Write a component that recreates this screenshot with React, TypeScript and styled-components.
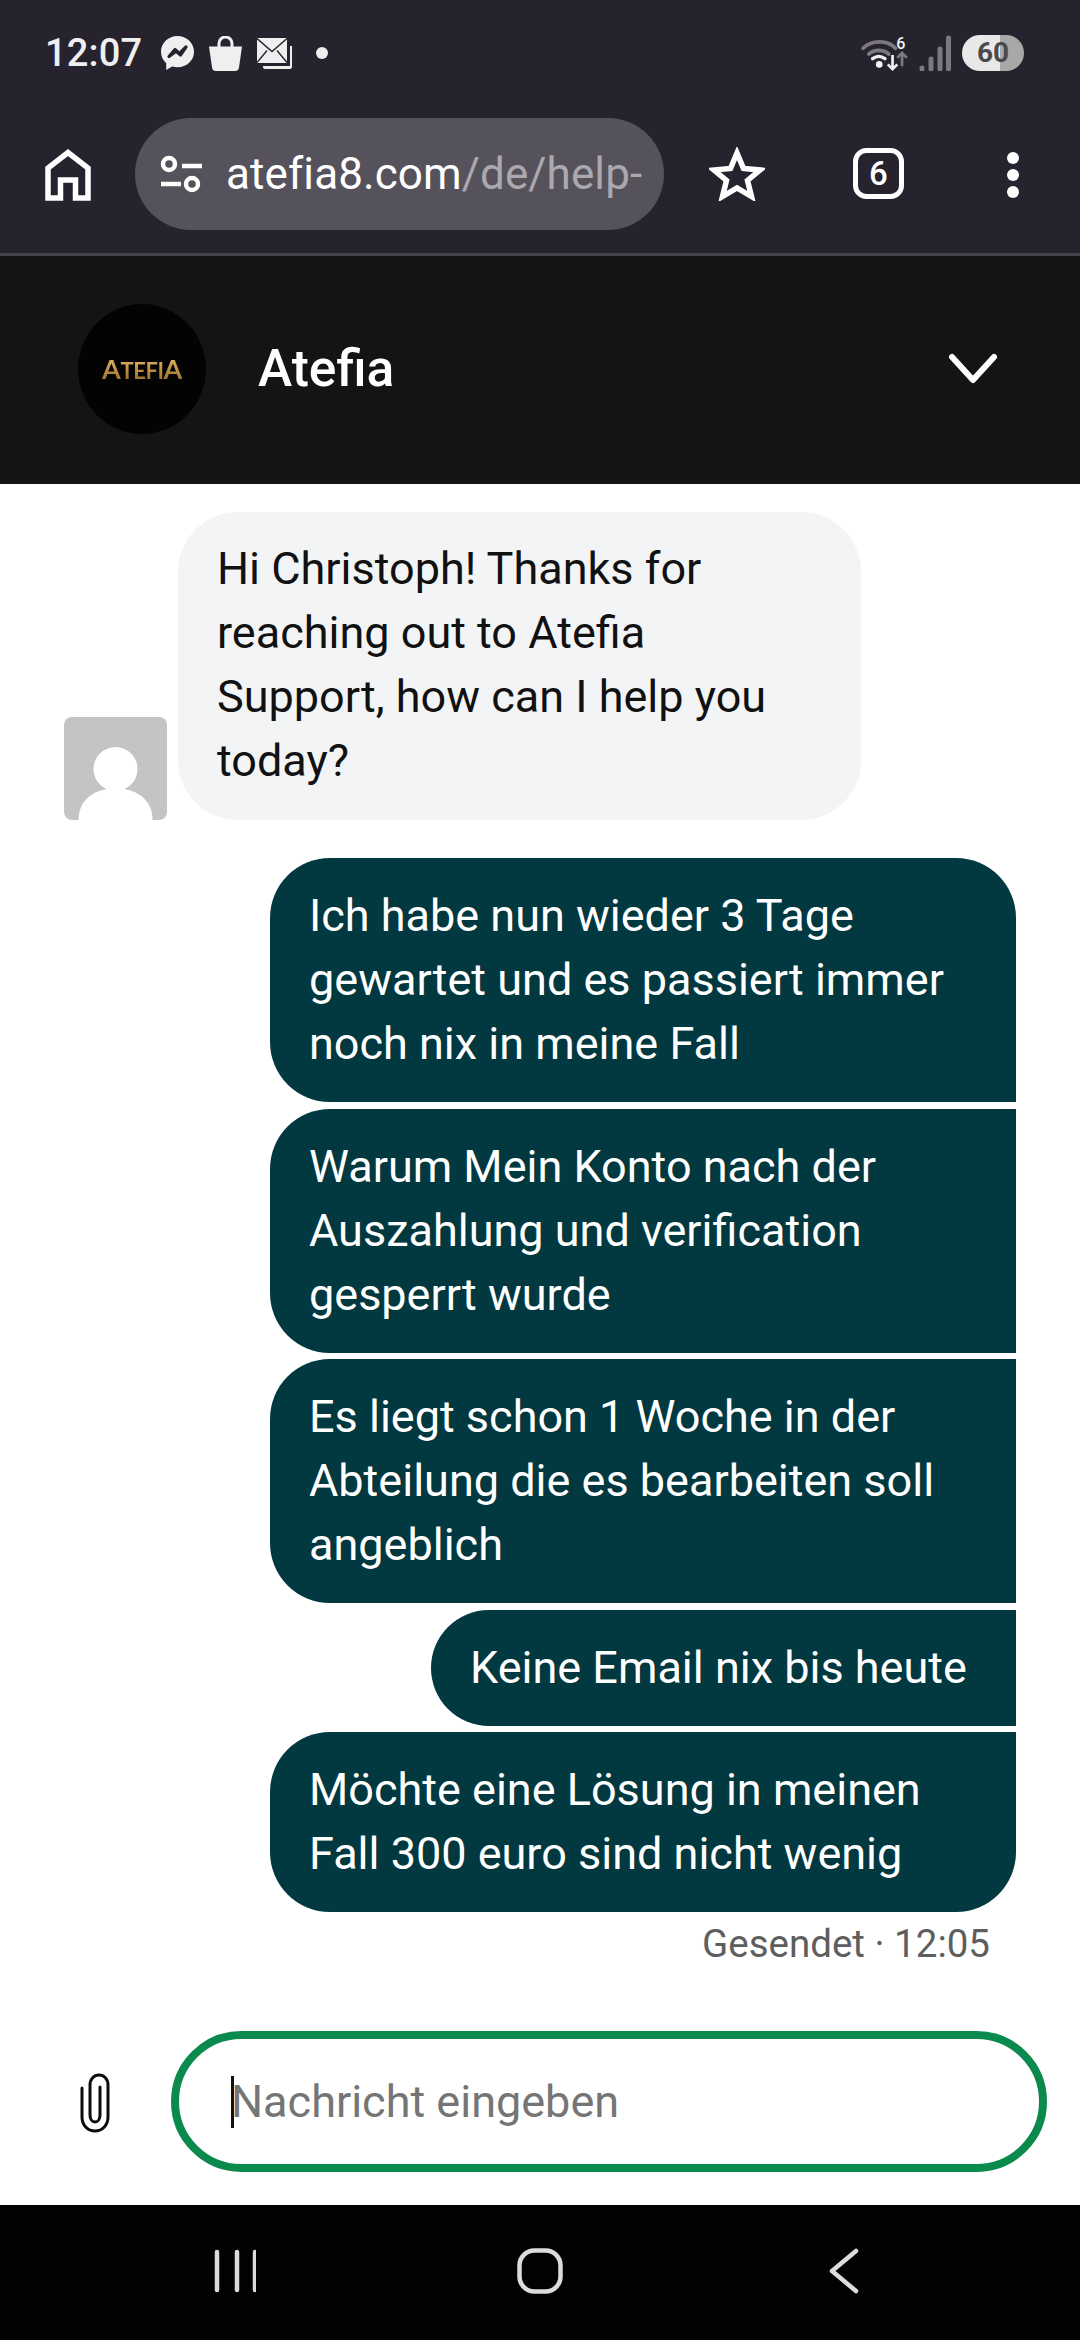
import React from "react";
import styled, { createGlobalStyle } from "styled-components";

const Global = createGlobalStyle`
  html, body { margin: 0; padding: 0; background: #fff; }
  * { box-sizing: border-box; }
  body { font-family: Roboto, "Liberation Sans", sans-serif; }
`;
const Page = styled.div`
  width: 1080px; height: 2340px; display: flex; flex-direction: column; overflow: hidden; background: #fff;
`;
const BrowserChrome = styled.div`
  height: 256px; background: #26222e; border-bottom: 3px solid #45424e; flex: none;
`;
const StatusBar = styled.div`
  height: 106px; padding: 0 0 0 45px; display: flex; align-items: center; color: #f1f1f1;
`;
const Time = styled.span`
  font: 500 38px/1 Roboto, sans-serif; letter-spacing: 0.2px; width: 116px; color: #efefef;
`;
const NotifIcons = styled.div`
  display: flex; align-items: center; gap: 15px;
`;
const Dot = styled.span`
  width: 12px; height: 12px; border-radius: 50%; background: #efefef; margin-left: 24px;
`;
const StatusRight = styled.div`
  margin-left: auto; margin-right: 56px; display: flex; align-items: center; gap: 11px;
`;
const Battery = styled.div`
  width: 62px; height: 36px; border-radius: 18px; overflow: hidden;
  background: linear-gradient(90deg, #e8e8e8 0 61%, #a8a8a8 61% 100%);
  display: flex; align-items: center; justify-content: center;
  font: 700 28px/1 Roboto, sans-serif; color: #4a4a4e;
`;
const Toolbar = styled.div`
  height: 147px; display: flex; align-items: flex-start; padding: 12px 0 0 45px;
`;
const ToolIcon = styled.div<{ $ml: number; $mt: number }>`
  margin-left: ${(p) => p.$ml}px; margin-top: ${(p) => p.$mt}px; display: flex; flex: none;
`;
const UrlPill = styled.div`
  width: 529px; height: 112px; margin-left: 44px; border-radius: 56px; background: #56525c;
  display: flex; align-items: center; padding-left: 25px; overflow: hidden; flex: none;
`;
const UrlText = styled.div`
  margin-left: 24px; font: 400 44px/1 Roboto, sans-serif; color: #fff; white-space: nowrap; letter-spacing: 0.1px;
  span { color: #aba8ae; }
`;
const ChatHeader = styled.header`
  height: 228px; flex: none; background: #141512; display: flex; align-items: center; padding: 0 82px 3px 78px;
`;
const Logo = styled.div`
  width: 128px; height: 130px; border-radius: 50%; background: #030303; display: flex; align-items: center; justify-content: center;
`;
const LogoText = styled.span`
  font: 700 27px/1 Lato, sans-serif; letter-spacing: -0.4px;
  background: linear-gradient(180deg, #e8bd68, #9a6c2a);
  -webkit-background-clip: text; background-clip: text; color: transparent;
  small { font-size: 22px; }
`;
const Title = styled.h1`
  margin: 0 0 0 52px; font: 500 51.500px/1 Roboto, sans-serif; color: #fff; flex: 1;
`;
const Chat = styled.main`
  flex: 1; display: flex; flex-direction: column; padding-top: 28px;
`;
const IncomingRow = styled.div`
  display: flex; align-items: flex-end; padding-left: 64px; gap: 11px; margin-bottom: 38px;
`;
const Avatar = styled.div`
  width: 103px; height: 103px; border-radius: 8px; background: #c4c4c4; overflow: hidden; display: flex; flex: none;
`;
const Bubble = styled.div`
  font: 400 45px/64px Roboto, sans-serif; padding: 26px 39px; white-space: nowrap;
`;
const InBubble = styled(Bubble)`
  width: 683px; background: #f3f4f6; color: #111; border-radius: 60px; padding-top: 25px; padding-bottom: 27px;
`;
const OutBubble = styled(Bubble)<{ $w: number; $first?: boolean; $last?: boolean }>`
  width: ${(p) => p.$w}px; background: #023840; color: #fff; margin: 0 64px 6.500px auto;
  border-radius: 60px ${(p) => (p.$first ? "60px" : "0")} ${(p) => (p.$last ? "60px" : "0")} 60px;
`;
const Meta = styled.div`
  font: 400 38.500px/1 Roboto, sans-serif; color: #5e5e5e; text-align: right; padding-right: 90px; margin-top: 6px;
`;
const Composer = styled.div`
  flex: none; height: 174px; display: flex; align-items: flex-start;
`;
const Clip = styled.div`
  margin: 42px 61px 0 80px; display: flex; flex: none;
`;
const InputBox = styled.div`
  width: 876px; height: 141px; border: 8px solid #0a8a4c; border-radius: 71px; display: flex; align-items: center; padding-left: 52px;
  font: 400 45px/1 Roboto, sans-serif; color: #757575;
`;
const Caret = styled.span`
  width: 3px; height: 52px; background: #111; margin-right: -3px; flex: none;
`;
const NavBar = styled.nav`
  height: 135px; flex: none; background: #020202; display: flex; align-items: flex-start; padding: 43px 0 0 210px;
`;
const NavIcon = styled.div<{ $ml: number }>`
  margin-left: ${(p) => p.$ml}px; display: flex;
`;

export default function App() {
  return (
    <Page>
      <Global />
      <BrowserChrome>
        <StatusBar>
          <Time>12:07</Time>
          <NotifIcons>
            <svg width="33" height="34" viewBox="0 0 33 34">
              <path fill="#efefef" d="M16.5 0C7.4 0 0 6.9 0 15.8c0 4.6 2 8.6 5.2 11.4V34l6-3.5c1.7.5 3.5.8 5.3.8 9.1 0 16.5-6.7 16.5-15.5S25.600 0 16.500 0z" />
              <path fill="none" stroke="#26222e" strokeWidth="3.2" strokeLinejoin="round" d="M8 20.500l6-7 4.500 4 6.500-6.500-5.500 8-4.500-3.800z" />
            </svg>
            <svg width="33" height="35" viewBox="0 0 33 35">
              <path fill="none" stroke="#efefef" strokeWidth="3" d="M10 11V7.500a6.500 6.500 0 0 1 13 0V11" />
              <path fill="#efefef" d="M0 10.500h33l-3 21a4 4 0 0 1-4 3.500H7a4 4 0 0 1-4-3.500z" />
            </svg>
            <svg width="35" height="31" viewBox="0 0 35 31">
              <path fill="#efefef" d="M6 28h27V8h2v21a2 2 0 0 1-2 2H8a2 2 0 0 1-2-2z" />
              <rect width="30" height="25" fill="#efefef" />
              <path fill="none" stroke="#26222e" strokeWidth="1.400" d="M0 .5l15 13 15-13M0 24.500l10-12M30 24.500l-10-12" />
            </svg>
          </NotifIcons>
          <Dot />
          <StatusRight>
            <svg width="48" height="38" viewBox="0 -2 48 40">
              <path fill="none" stroke="#7c7882" strokeWidth="4" strokeLinecap="round" d="M2 13c9-9 26-9 34 0M8 19c6-5 15-5 21 0" />
              <path fill="none" stroke="#f2f2f2" strokeWidth="3.500" strokeLinecap="round" d="M12 24c4-3 9-3 13 0" />
              <circle cx="19" cy="30" r="3.500" fill="#f2f2f2" />
              <path fill="none" stroke="#f2f2f2" strokeWidth="2.800" d="M33 20v15M28 30l5 5 5-5" />
              <path fill="none" stroke="#7c7882" strokeWidth="2.800" d="M43 32V18M38 23l5-5 5 5" />
              <text x="37" y="14" fontFamily="Roboto, sans-serif" fontWeight="500" fontSize="17" fill="#f2f2f2">6</text>
            </svg>
            <svg width="32" height="36" viewBox="0 0 32 36">
              <g stroke="#7c7882" strokeWidth="5" strokeLinecap="round">
                <path d="M3 33v1M12 24v10M21 14v20M29.500 3v31" />
              </g>
            </svg>
            <Battery>60</Battery>
          </StatusRight>
        </StatusBar>
        <Toolbar>
          <ToolIcon $ml={0} $mt={31}>
            <svg width="46" height="52" viewBox="0 0 46 52">
              <path fill="none" stroke="#fff" strokeWidth="5.500" d="M3 49V19L23 3.500 43 19v30H30.500V31h-15v18z" />
            </svg>
          </ToolIcon>
          <UrlPill>
            <svg width="42" height="38" viewBox="0 0 42 38" style={{ flex: "none" }}>
              <g fill="none" stroke="#fff" strokeWidth="4.500">
                <circle cx="9" cy="9" r="6" />
                <circle cx="32" cy="29" r="6" />
              </g>
              <g stroke="#fff" strokeWidth="4.500">
                <path d="M22 11h20M1 29h20" />
              </g>
            </svg>
            <UrlText>atefia8.com<span>/de/help-</span></UrlText>
          </UrlPill>
          <ToolIcon $ml={45} $mt={29}>
            <svg width="56" height="54" viewBox="0 0 56 54">
              <path fill="none" stroke="#fff" strokeWidth="5.500" d="M28 6l6.500 15.500L51 23 38.500 33.500 42.500 49.500 28 41l-14.500 8.500L17.500 33.500 5 23l16.500-1.500z" />
            </svg>
          </ToolIcon>
          <ToolIcon $ml={88} $mt={30}>
            <svg width="51" height="51" viewBox="0 0 51 51">
              <rect x="2.500" y="2.500" width="46" height="46" rx="11" fill="none" stroke="#fff" strokeWidth="5" />
              <text x="25.500" y="37" textAnchor="middle" fontFamily="Roboto, sans-serif" fontWeight="500" fontSize="33" fill="#fff">6</text>
            </svg>
          </ToolIcon>
          <ToolIcon $ml={102} $mt={33}>
            <svg width="14" height="50" viewBox="0 0 14 50">
              <g fill="#fff">
                <circle cx="7" cy="7" r="6" />
                <circle cx="7" cy="24" r="6" />
                <circle cx="7" cy="41" r="6" />
              </g>
            </svg>
          </ToolIcon>
        </Toolbar>
      </BrowserChrome>

      <ChatHeader>
        <Logo>
          <LogoText>A<small>TEFI</small>A</LogoText>
        </Logo>
        <Title>Atefia</Title>
        <svg width="50" height="32" viewBox="0 0 50 32">
          <path fill="none" stroke="#fff" strokeWidth="6" strokeLinecap="round" strokeLinejoin="round" d="M4 4l21 23L46 4" />
        </svg>
      </ChatHeader>

      <Chat>
        <IncomingRow>
          <Avatar>
            <svg width="103" height="103" viewBox="0 0 103 103">
              <circle cx="51.500" cy="52" r="22" fill="#fff" />
              <path fill="#fff" d="M14.500 103c0-18 12-28 28-31h18c16 3 28 13 28 31z" />
            </svg>
          </Avatar>
          <InBubble>
            Hi Christoph! Thanks for<br />reaching out to Atefia<br />Support, how can I help you<br />today?
          </InBubble>
        </IncomingRow>
        <OutBubble $w={746} $first>
          Ich habe nun wieder 3 Tage<br />gewartet und es passiert immer<br />noch nix in meine Fall
        </OutBubble>
        <OutBubble $w={746}>
          Warum Mein Konto nach der<br />Auszahlung und verification<br />gesperrt wurde
        </OutBubble>
        <OutBubble $w={746}>
          Es liegt schon 1 Woche in der<br />Abteilung die es bearbeiten soll<br />angeblich
        </OutBubble>
        <OutBubble $w={585}>Keine Email nix bis heute</OutBubble>
        <OutBubble $w={746} $last>
          Möchte eine Lösung in meinen<br />Fall 300 euro sind nicht wenig
        </OutBubble>
        <Meta>Gesendet · 12:05</Meta>
      </Chat>

      <Composer>
        <Clip>
          <svg width="30" height="60" viewBox="0 0 30 60">
            <path fill="none" stroke="#0c0c0c" strokeWidth="3" strokeLinecap="round" d="M2 15v29c0 8 5.500 14 13 14s13-6 13-14V12C28 6 24 2 19 2s-9 4-9 10v30c0 4 2 7 5 7s5-3 5-7V14" />
          </svg>
        </Clip>
        <InputBox>
          <Caret />
          Nachricht eingeben
        </InputBox>
      </Composer>

      <NavBar>
        <svg width="46" height="46" viewBox="0 0 46 46">
          <g stroke="#dcdcdc" strokeWidth="4.500" strokeLinecap="round">
            <path d="M7 4v38M27 4v38M45 4v38" />
          </g>
        </svg>
        <NavIcon $ml={261}>
          <svg width="46" height="46" viewBox="0 0 46 46">
            <rect x="2.500" y="2.500" width="41" height="41" rx="15" fill="none" stroke="#dcdcdc" strokeWidth="4.500" />
          </svg>
        </NavIcon>
        <NavIcon $ml={266}>
          <svg width="30" height="46" viewBox="0 0 30 46">
            <path fill="none" stroke="#dcdcdc" strokeWidth="4.500" strokeLinecap="round" strokeLinejoin="round" d="M27 3L3 23l24 20" />
          </svg>
        </NavIcon>
      </NavBar>
    </Page>
  );
}
